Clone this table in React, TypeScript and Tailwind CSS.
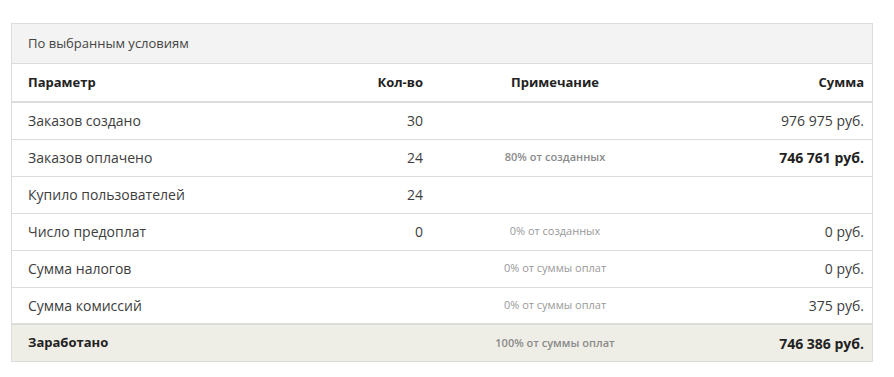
import React from 'react';

type Row = {
  label: string;
  count?: string;
  note?: string;
  noteBold?: boolean;
  sum?: string;
  sumBold?: boolean;
};

const ROWS: Row[] = [
  { label: 'Заказов создано', count: '30', sum: '976 975 руб.' },
  { label: 'Заказов оплачено', count: '24', note: '80% от созданных', noteBold: true, sum: '746 761 руб.', sumBold: true },
  { label: 'Купило пользователей', count: '24' },
  { label: 'Число предоплат', count: '0', note: '0% от созданных', sum: '0 руб.' },
  { label: 'Сумма налогов', note: '0% от суммы оплат', sum: '0 руб.' },
  { label: 'Сумма комиссий', note: '0% от суммы оплат', sum: '375 руб.' },
];

function Note({ text, bold }: { text?: string; bold?: boolean }) {
  if (!text) return null;
  return (
    <span
      className={`relative -top-[2px] text-[11px] ${bold ? 'font-semibold text-[#8a8a8a]' : 'text-[#999]'}`}
    >
      {text}
    </span>
  );
}

export default function App() {
  return (
    <div
      className="min-h-[377px] bg-white pt-[23px] pl-[11px] text-[#3d3d3d]"
      style={{ fontFamily: '"Open Sans", "Liberation Sans", sans-serif' }}
    >
      <div className="w-[862px] border border-[#dcdcdc]">
        <div className="flex h-[40px] items-center border-b border-[#dcdcdc] bg-[#f3f3f3] pl-4 text-[13px] text-[#444]">
          По выбранным условиям
        </div>
        <table className="w-full border-collapse text-[14px]">
          <colgroup>
            <col className="w-[418px]" />
            <col className="w-[250px]" />
            <col />
          </colgroup>
          <thead>
            <tr className="h-[38px] border-b-2 border-[#dcdcdc] text-[13px] font-bold text-[#222]">
              <th className="pl-4 text-left">
                <div className="flex items-center justify-between pr-[7px]">
                  <span>Параметр</span>
                  <span>Кол-во</span>
                </div>
              </th>
              <th className="text-center">Примечание</th>
              <th className="pr-[8px] text-right">Сумма</th>
            </tr>
          </thead>
          <tbody>
            {ROWS.map((r) => (
              <tr key={r.label} className="h-[37px] border-b border-[#dcdcdc]">
                <td className="pl-4">
                  <div className="flex items-center justify-between pr-[7px]">
                    <span>{r.label}</span>
                    <span>{r.count}</span>
                  </div>
                </td>
                <td className="text-center">
                  <Note text={r.note} bold={r.noteBold} />
                </td>
                <td className={`pr-[8px] text-right ${r.sumBold ? 'font-bold text-[#222]' : ''}`}>{r.sum}</td>
              </tr>
            ))}
          </tbody>
          <tfoot>
            <tr className="h-[37px] border-t-2 border-[#dcdcdc] bg-[#efeee6] font-bold text-[#222]">
              <td className="pl-4 text-[13px]">Заработано</td>
              <td className="text-center font-normal">
                <Note text="100% от суммы оплат" bold />
              </td>
              <td className="pr-[8px] text-right">746 386 руб.</td>
            </tr>
          </tfoot>
        </table>
      </div>
    </div>
  );
}
